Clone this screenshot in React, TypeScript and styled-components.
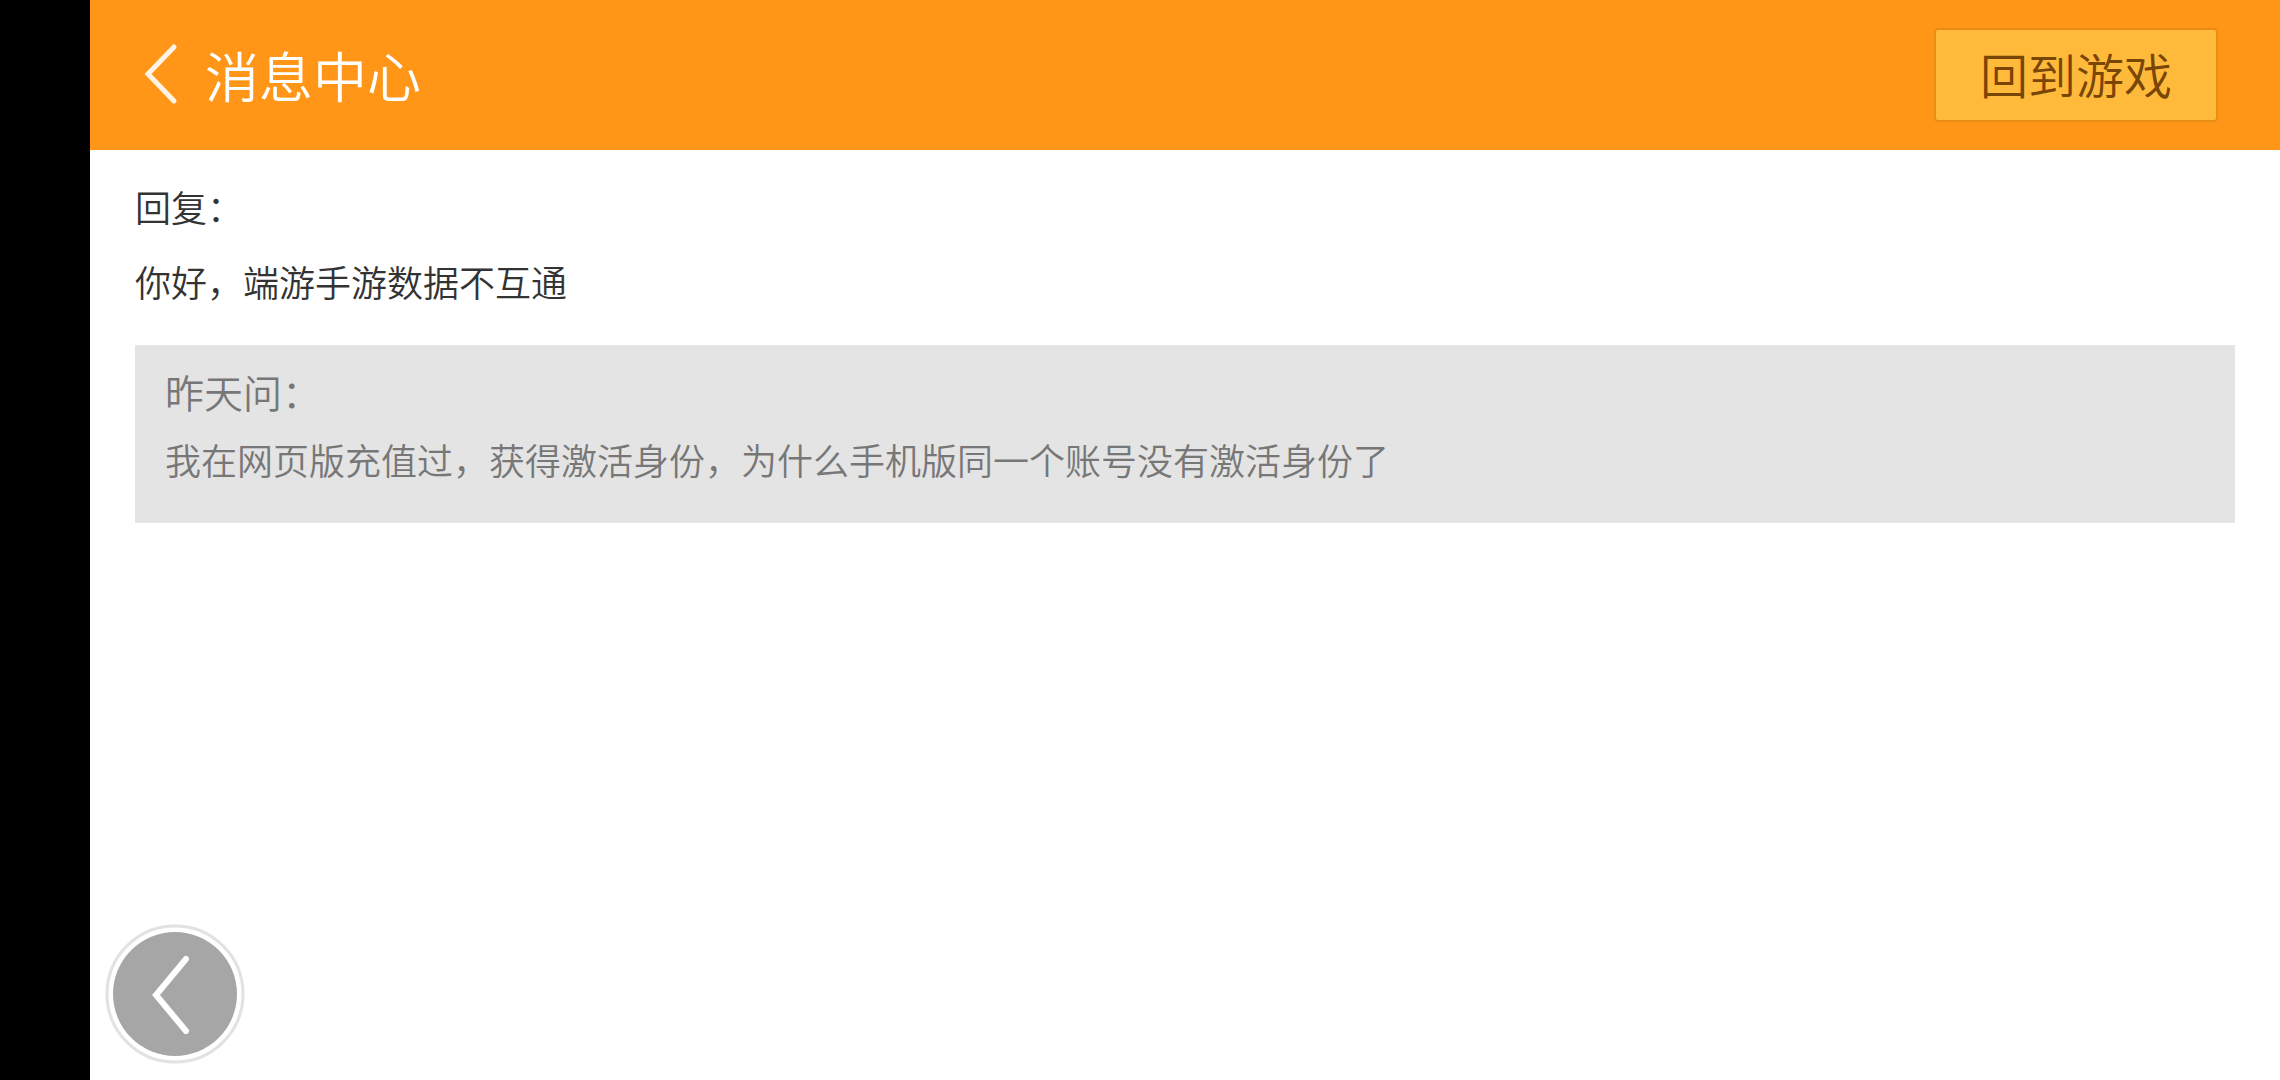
import React from "react";
import styled, { createGlobalStyle } from "styled-components";

const Global = createGlobalStyle`
  * { box-sizing: border-box; }
  body {
    margin: 0;
    background: #fff;
    font-family: "Noto Sans CJK SC", sans-serif;
    font-weight: 350;
  }
`;
const Screen = styled.div`
  display: flex;
  min-height: 100vh;
`;
const Notch = styled.div`
  flex: 0 0 90px;
  background: #000;
`;
const Page = styled.div`
  flex: 1;
  min-width: 0;
`;
const Header = styled.header`
  display: flex;
  align-items: center;
  justify-content: space-between;
  height: 150px;
  padding: 0 62px 0 53px;
  background: #ff9617;
`;
const Heading = styled.div`
  display: flex;
  align-items: center;
  gap: 26px;
`;
const BackButton = styled.button`
  display: flex;
  padding: 0;
  border: 0;
  background: none;
`;
const Title = styled.h1`
  margin: 0;
  color: #fff;
  font-size: 54px;
  font-weight: inherit;
  line-height: 80px;
`;
const GameButton = styled.button`
  min-width: 284px;
  height: 94px;
  padding: 0 0 4px;
  border: 2px solid #ea8d14;
  border-radius: 4px;
  background: #ffba3c;
  color: #7a4606;
  font-family: inherit;
  font-size: 48px;
  font-weight: inherit;
`;
const Content = styled.main`
  padding: 32px 45px;
`;
const Messages = styled.section`
  display: grid;
  gap: 27px;
  color: #333;
  font-size: 36px;
  line-height: 48px;
`;
const Reply = styled.p`
  margin: 0;
`;
const Question = styled.section`
  display: grid;
  gap: 4px;
  margin-top: 40px;
  padding: 16px 30px 30px;
  background: #e4e4e4;
  color: #777;
`;
const Asked = styled.h2`
  margin: 0;
  font-size: 39px;
  font-weight: inherit;
  line-height: 60px;
`;
const QuestionText = styled.p`
  margin: 0;
  font-size: 36px;
  line-height: 68px;
`;
const FloatingBack = styled.button`
  position: fixed;
  left: 105px;
  bottom: 16px;
  padding: 0;
  border: 0;
  background: none;
  display: flex;
`;

export default function App() {
  return (
    <Screen>
      <Global />
      <Notch />
      <Page>
        <Header>
          <Heading>
            <BackButton aria-label="返回">
              <svg width="36" height="64" viewBox="0 0 36 64" fill="none" stroke="#fff4e4" strokeWidth="5" strokeLinecap="round">
                <path d="M31 4 5 31 31 58" />
              </svg>
            </BackButton>
            <Title>消息中心</Title>
          </Heading>
          <GameButton>回到游戏</GameButton>
        </Header>
        <Content>
          <Messages>
            <Reply>回复：</Reply>
            <Reply>你好，端游手游数据不互通</Reply>
          </Messages>
          <Question>
            <Asked>昨天问：</Asked>
            <QuestionText>我在网页版充值过，获得激活身份，为什么手机版同一个账号没有激活身份了</QuestionText>
          </Question>
        </Content>
      </Page>
      <FloatingBack aria-label="后退">
        <svg width="140" height="140" viewBox="0 0 140 140" fill="none">
          <circle cx="70" cy="70" r="68" fill="#fff" stroke="#e2e2e2" strokeWidth="3" />
          <circle cx="70" cy="70" r="62" fill="#a6a6a6" />
          <path d="M81 35 51 71 81 107" stroke="#fff" strokeWidth="6" strokeLinecap="round" />
        </svg>
      </FloatingBack>
    </Screen>
  );
}
